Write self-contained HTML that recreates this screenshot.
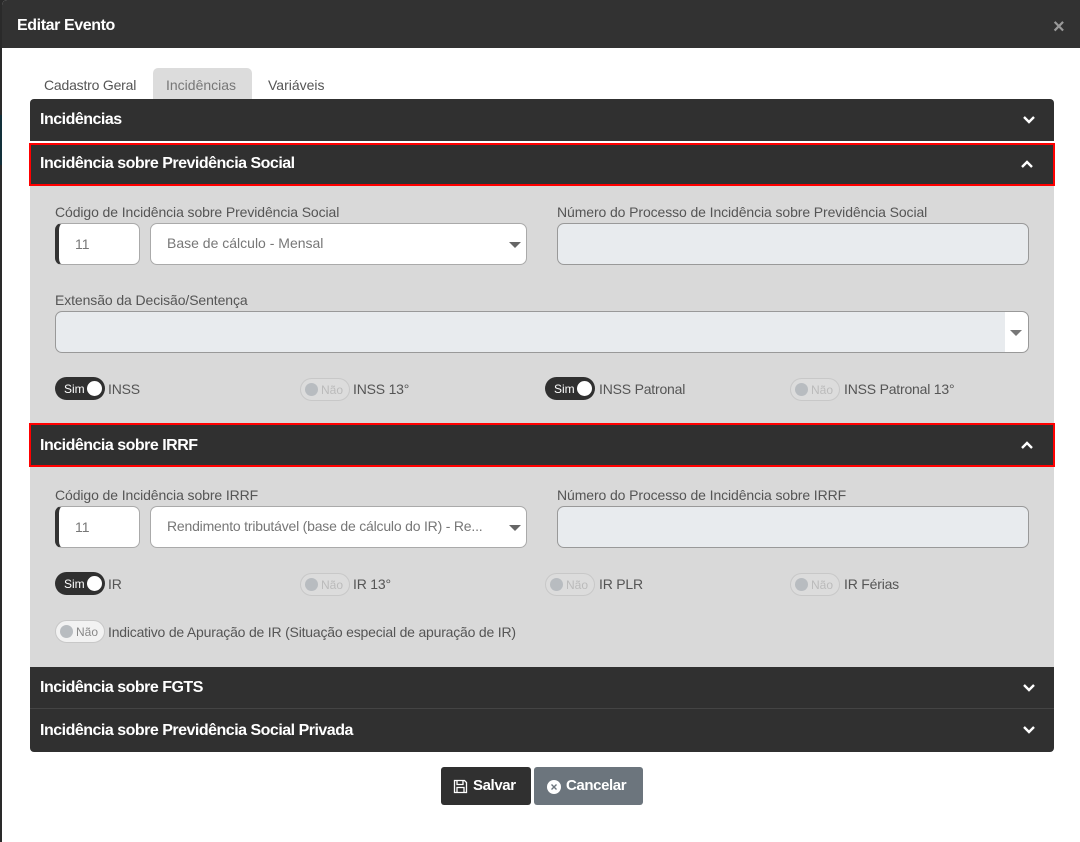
<!DOCTYPE html>
<html><head><meta charset="utf-8"><style>
*{box-sizing:border-box;margin:0;padding:0}
body{width:1080px;height:842px;overflow:hidden;background:#2a2a2a;font-family:"Liberation Sans",Arial,sans-serif;position:relative}
.a{position:absolute}
.modal{left:2px;top:0;width:1078px;height:842px;background:#fff;border-radius:5px 0 0 0;overflow:hidden}
.hdr{left:0;top:0;width:1078px;height:48px;background:#323232}
.t{color:#fff;font-weight:bold;font-size:16px;letter-spacing:-0.4px}
.bar{left:30px;width:1024px;background:#303030;color:#fff;font-weight:bold;font-size:16px;padding-left:10px;letter-spacing:-0.5px}
.red{border:2px solid #f00}
.body{left:30px;width:1024px;background:#d9d9d9}
.lbl{font-size:14px;color:#555;letter-spacing:-0.1px}
.inp{background:#fff;border:1px solid #aaa;border-radius:7px;height:42px;font-size:14px;color:#777}
.dis{background:#e8ebee;border:1px solid #999;border-radius:7px;height:42px}
.tg{height:23px;width:50px;border-radius:12px;font-size:12px}
.on{background:#303030;color:#fff}
.on span{position:absolute;left:9px;top:5px}
.on i{position:absolute;right:3px;top:4px;width:15px;height:15px;border-radius:50%;background:#fff}
.off{border:1px solid #c8c8c8;color:#bbb;background:#dcdcdc}
.off span{position:absolute;left:20px;top:4px}
.off i{position:absolute;left:4px;top:4px;width:13px;height:13px;border-radius:50%;background:#b8bcc0}
.tl{font-size:14px;color:#555;letter-spacing:-0.2px}
.chev{position:absolute;right:19px;width:12px;height:12px}
.arr{position:absolute;width:0;height:0;border-left:6px solid transparent;border-right:6px solid transparent;border-top:6px solid #666}
</style></head><body>
<div class="a" style="left:0;top:115px;width:3px;height:50px;background:#12303a"></div>
<div class="a modal">
<div class="a hdr"></div>
<div class="a t" style="left:15px;top:17px">Editar Evento</div>
<div class="a" style="left:1051px;top:16px;color:#999;font-size:20px;font-weight:bold">×</div>
</div>
<div class="a" style="left:44px;top:77px;font-size:14px;color:#555;letter-spacing:-0.2px">Cadastro Geral</div>
<div class="a" style="left:153px;top:68px;width:99px;height:31px;background:#dcdcdc;border-radius:5px 5px 0 0"></div>
<div class="a" style="left:166px;top:77px;font-size:14px;color:#777">Incidências</div>
<div class="a" style="left:268px;top:77px;font-size:14px;color:#555">Variáveis</div>

<div class="a bar" style="top:99px;height:42px;line-height:42px;border-radius:4px 4px 0 0">Incidências
<svg class="chev" style="top:15px" viewBox="0 0 12 12"><path d="M1 3l5 5 5-5" stroke="#fff" stroke-width="2.4" fill="none"/></svg></div>
<div class="a bar red" style="top:143px;left:29px;width:1026px;height:43px;line-height:38px;padding-left:9px">Incidência sobre Previdência Social
<svg class="chev" style="top:13px;right:20px" viewBox="0 0 12 12"><path d="M1 9l5-5 5 5" stroke="#fff" stroke-width="2.4" fill="none"/></svg></div>

<div class="a body" style="top:186px;height:237px"></div>
<div class="a lbl" style="left:55px;top:204px">Código de Incidência sobre Previdência Social</div>
<div class="a inp" style="left:55px;top:223px;width:85px;border-left:4px solid #333;padding:12px 0 0 16px">11</div>
<div class="a inp" style="left:150px;top:223px;width:377px;padding:11px 0 0 16px">Base de cálculo - Mensal<div class="arr" style="right:5px;top:18px"></div></div>
<div class="a lbl" style="left:557px;top:204px">Número do Processo de Incidência sobre Previdência Social</div>
<div class="a dis" style="left:557px;top:223px;width:472px"></div>
<div class="a lbl" style="left:55px;top:292px">Extensão da Decisão/Sentença</div>
<div class="a dis" style="left:55px;top:311px;width:974px;background:linear-gradient(to right,#e8ebee 949px,#fff 949px)"><div class="arr" style="right:6px;top:18px;border-top-color:#777"></div></div>

<div class="a tg on" style="left:55px;top:377px"><span>Sim</span><i></i></div><div class="a tl" style="left:108px;top:381px">INSS</div>
<div class="a tg off" style="left:300px;top:378px"><i></i><span>Não</span></div><div class="a tl" style="left:353px;top:381px">INSS 13°</div>
<div class="a tg on" style="left:545px;top:377px"><span>Sim</span><i></i></div><div class="a tl" style="left:599px;top:381px">INSS Patronal</div>
<div class="a tg off" style="left:790px;top:378px"><i></i><span>Não</span></div><div class="a tl" style="left:844px;top:381px">INSS Patronal 13°</div>

<div class="a bar red" style="top:423px;left:29px;width:1026px;height:44px;line-height:42px;padding-left:9px">Incidência sobre IRRF
<svg class="chev" style="top:14px;right:20px" viewBox="0 0 12 12"><path d="M1 9l5-5 5 5" stroke="#fff" stroke-width="2.4" fill="none"/></svg></div>

<div class="a body" style="top:467px;height:200px"></div>
<div class="a lbl" style="left:55px;top:487px">Código de Incidência sobre IRRF</div>
<div class="a inp" style="left:55px;top:506px;width:85px;border-left:4px solid #333;padding:12px 0 0 16px">11</div>
<div class="a inp" style="left:150px;top:506px;width:377px;padding:11px 0 0 16px;letter-spacing:-0.2px">Rendimento tributável (base de cálculo do IR) - Re...<div class="arr" style="right:5px;top:18px"></div></div>
<div class="a lbl" style="left:557px;top:487px">Número do Processo de Incidência sobre IRRF</div>
<div class="a dis" style="left:557px;top:506px;width:472px"></div>

<div class="a tg on" style="left:55px;top:572px"><span>Sim</span><i></i></div><div class="a tl" style="left:108px;top:576px">IR</div>
<div class="a tg off" style="left:300px;top:573px"><i></i><span>Não</span></div><div class="a tl" style="left:353px;top:576px">IR 13°</div>
<div class="a tg off" style="left:545px;top:573px"><i></i><span>Não</span></div><div class="a tl" style="left:599px;top:576px">IR PLR</div>
<div class="a tg off" style="left:790px;top:573px"><i></i><span>Não</span></div><div class="a tl" style="left:844px;top:576px">IR Férias</div>
<div class="a tg off" style="left:55px;top:620px;background:#f2f2f2"><i></i><span style="color:#888">Não</span></div><div class="a tl" style="left:108px;top:624px">Indicativo de Apuração de IR (Situação especial de apuração de IR)</div>

<div class="a bar" style="top:667px;height:42px;line-height:42px;border-bottom:1px solid #444">Incidência sobre FGTS
<svg class="chev" style="top:15px" viewBox="0 0 12 12"><path d="M1 3l5 5 5-5" stroke="#fff" stroke-width="2.4" fill="none"/></svg></div>
<div class="a bar" style="top:709px;height:43px;line-height:43px;border-radius:0 0 4px 4px">Incidência sobre Previdência Social Privada
<svg class="chev" style="top:15px" viewBox="0 0 12 12"><path d="M1 3l5 5 5-5" stroke="#fff" stroke-width="2.4" fill="none"/></svg></div>

<div class="a" style="left:441px;top:767px;width:90px;height:38px;background:#303030;border-radius:3px;color:#fff;font-weight:bold;font-size:15px;line-height:38px;padding-left:32px;letter-spacing:-0.4px">Salvar
<svg class="a" style="left:12px;top:12px" width="15" height="15" viewBox="0 0 15 15"><path d="M1.5 1.5h10l2 2v10h-12z M4 1.5v4h6v-4 M4 13.5v-5h7v5" stroke="#fff" stroke-width="1.3" fill="none"/></svg></div>
<div class="a" style="left:534px;top:767px;width:109px;height:38px;background:#6c757d;border-radius:3px;color:#fff;font-weight:bold;font-size:15px;line-height:38px;padding-left:32px;letter-spacing:-0.4px">Cancelar
<svg class="a" style="left:13px;top:13px" width="14" height="14" viewBox="0 0 14 14"><circle cx="7" cy="7" r="7" fill="#fff"/><path d="M4.5 4.5l5 5M9.5 4.5l-5 5" stroke="#6c757d" stroke-width="1.4"/></svg></div>
</body></html>
